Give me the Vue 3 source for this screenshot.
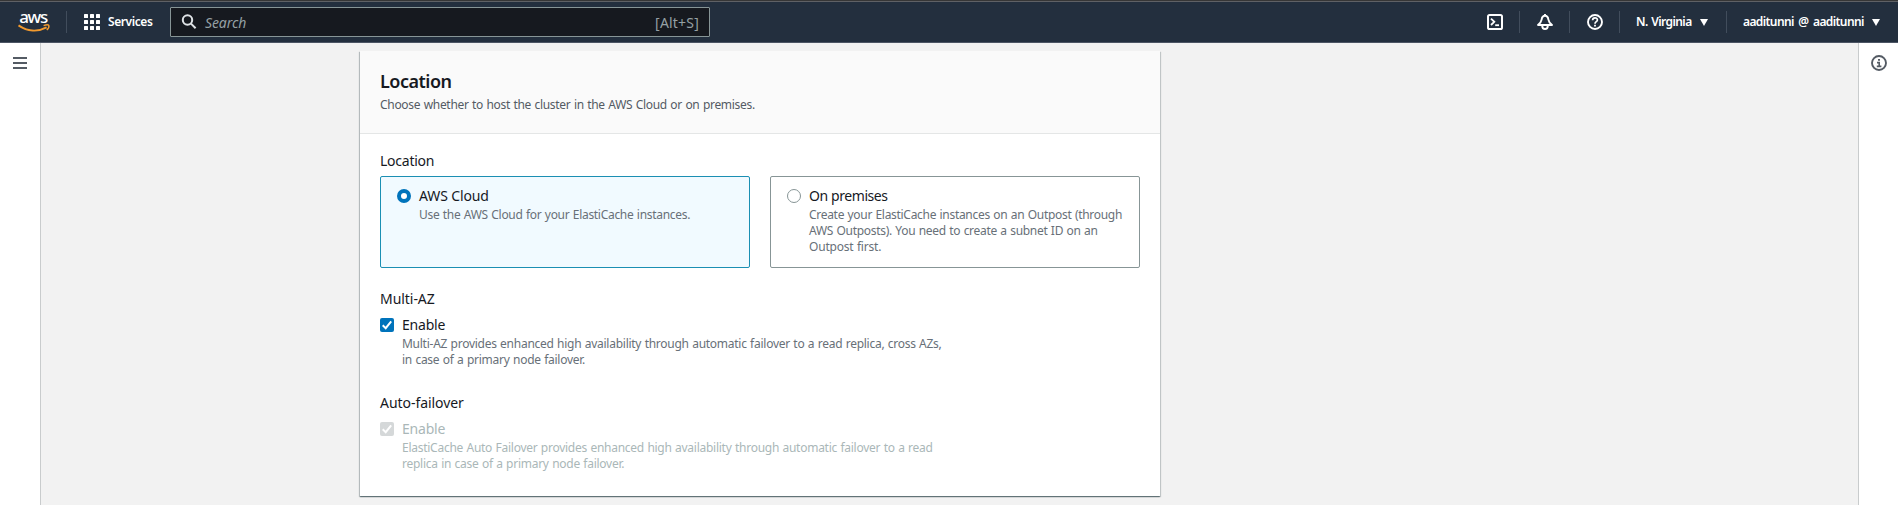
<script setup>
const locations = [
  {
    title: 'AWS Cloud',
    lines: [{ text: 'Use the AWS Cloud for your ElastiCache instances.', fit: 'fit-b' }],
    selected: true,
    fit: 'title-a'
  },
  {
    title: 'On premises',
    lines: [
      { text: 'Create your ElastiCache instances on an Outpost (through', fit: 'fit-b' },
      { text: 'AWS Outposts). You need to create a subnet ID on an', fit: 'fit-b' },
      { text: 'Outpost first.', fit: 'fit-a' }
    ],
    selected: false,
    fit: 'title-b'
  }
]

const toggles = [
  {
    label: 'Multi-AZ',
    lines: [
      'Multi-AZ provides enhanced high availability through automatic failover to a read replica, cross AZs,',
      'in case of a primary node failover.'
    ],
    disabled: false
  },
  {
    label: 'Auto-failover',
    lines: [
      'ElastiCache Auto Failover provides enhanced high availability through automatic failover to a read',
      'replica in case of a primary node failover.'
    ],
    disabled: true
  }
]
</script>

<template>
  <div class="page">
    <header class="topbar">
      <svg class="logo" width="34" height="30" viewBox="0 -3 34 30">
        <text x="1.2" y="12.8" class="logo-text" textLength="29">aws</text>
        <path d="M.5 15.4C9.5 21.6 20 22 28.6 17.4" class="smile" />
        <path d="M25.6 15.6C28 14.7 30.4 14.8 30.8 15.4C31.2 16.4 30.3 18.6 28.8 20" class="smile-tip" />
      </svg>
      <span class="divider first"></span>
      <button class="services">
        <svg width="16" height="16" viewBox="0 0 16 16" fill="#fff">
          <template v-for="r in 3" :key="r">
            <rect v-for="c in 3" :key="c" :x="(c - 1) * 6" :y="(r - 1) * 6" width="4" height="4" rx=".5" />
          </template>
        </svg>
        <span>Services</span>
      </button>
      <div class="search">
        <svg width="16" height="16" viewBox="0 0 16 16" fill="none" stroke="#dfe3e6" stroke-width="2">
          <circle cx="6.5" cy="6" r="4.7" />
          <path d="M10 9.6L14.6 14.2" />
        </svg>
        <span class="placeholder">Search</span>
        <span class="shortcut">[Alt+S]</span>
      </div>
      <nav class="utilities">
        <span class="icon">
          <svg width="16" height="16" viewBox="0 0 16 16" fill="none" stroke="#fff" stroke-width="2">
            <rect x="1" y="1" width="14" height="14" rx="1.6" />
            <path d="M4 4.6L7.3 7.8L4 11" stroke-width="1.8" />
            <path d="M8.2 11.2H12" stroke-width="1.8" />
          </svg>
        </span>
        <span class="divider"></span>
        <span class="icon">
          <svg width="16" height="16" viewBox="0 0 16 16" fill="none" stroke="#fff" stroke-width="1.9" stroke-linejoin="round">
            <path d="M8 0V2M8 1.8C5.8 1.8 4.9 3.4 4.6 5.6C4.2 8 3 9.4 1 11H15C13 9.4 11.8 8 11.4 5.6C11.1 3.4 10.2 1.8 8 1.8Z" />
            <path d="M5.2 11.4C5.2 16.2 10.8 16.2 10.8 11.4" />
          </svg>
        </span>
        <span class="divider"></span>
        <span class="icon">
          <svg width="16" height="16" viewBox="0 0 16 16" fill="none" stroke="#fff" stroke-width="1.9">
            <circle cx="8" cy="8" r="7" />
            <path d="M5.6 6.2C5.7 3.1 10.4 3.2 10.4 6C10.4 7.8 8 7.6 8 9.7" stroke-width="1.7" />
            <path d="M8 10.8V12.6" stroke-width="1.8" />
          </svg>
        </span>
        <span class="divider"></span>
        <button class="menu region">N. Virginia</button>
        <svg class="caret" width="8" height="7" viewBox="0 0 8 7"><path d="M0 0H8L4 7Z" fill="#fff" /></svg>
        <span class="divider account-divider"></span>
        <button class="menu account">aaditunni @ aaditunni</button>
        <svg class="caret" width="8" height="7" viewBox="0 0 8 7"><path d="M0 0H8L4 7Z" fill="#fff" /></svg>
      </nav>
    </header>

    <div class="body">
      <aside class="rail left">
        <svg width="14" height="12" viewBox="0 0 14 12" fill="#545b64">
          <rect width="14" height="2" />
          <rect y="5" width="14" height="2" />
          <rect y="10" width="14" height="2" />
        </svg>
      </aside>

      <main class="content">
        <section class="card">
          <div class="card-head">
            <h2>Location</h2>
            <p class="desc fit-b">Choose whether to host the cluster in the AWS Cloud or on premises.</p>
          </div>
          <div class="card-body">
            <div class="label location-label">Location</div>
            <div class="options">
              <div v-for="o in locations" :key="o.title" class="option" :class="{ selected: o.selected }">
                <span class="radio"></span>
                <div>
                  <div class="title" :class="o.fit">{{ o.title }}</div>
                  <p v-for="l in o.lines" :key="l.text" class="desc muted" :class="l.fit">{{ l.text }}</p>
                </div>
              </div>
            </div>
            <div v-for="t in toggles" :key="t.label" class="toggle" :class="{ disabled: t.disabled }">
              <div class="label">{{ t.label }}</div>
              <div class="toggle-row">
                <span class="checkbox">
                  <svg width="14" height="14" viewBox="0 0 14 14" fill="none" stroke="#fff" stroke-width="2">
                    <path d="M2.7 7.3L5.7 10.2L11.2 3.4" />
                  </svg>
                </span>
                <div>
                  <div class="title enable">Enable</div>
                  <p v-for="l in t.lines" :key="l" class="desc muted">{{ l }}</p>
                </div>
              </div>
            </div>
          </div>
        </section>
      </main>

      <aside class="rail right">
        <svg width="16" height="16" viewBox="0 0 16 16" fill="none" stroke="#545b64">
          <circle cx="8" cy="8" r="7" stroke-width="1.9" />
          <path d="M7 4.8H9" stroke-width="1.7" />
          <path d="M6 7.6H8.2V11.2M5.8 11.4H10.4" stroke-width="1.6" />
        </svg>
      </aside>
    </div>
  </div>
</template>

<style>
html,
body {
  margin: 0;
  overflow: hidden;
}
</style>

<style scoped>
.page {
  height: 505px;
  display: flex;
  flex-direction: column;
  overflow: hidden;
  background: #f2f2f2;
  font-family: "Noto Sans", "Open Sans", sans-serif;
  font-size: 14px;
  color: #16191f;
  white-space: nowrap;
}

.page * {
  box-sizing: border-box;
}

button {
  border: 0;
  padding: 0;
  background: none;
  color: #fff;
  font: 600 12px/16px "Noto Sans", sans-serif;
  text-align: left;
}

.topbar {
  flex: none;
  height: 43px;
  display: flex;
  align-items: center;
  padding-top: 1px;
  background: linear-gradient(#363636 1px, #5f6165 1px, #5f6165 2px, #232f3e 2px, #232f3e 42px, #4c5564 42px);
}

.logo {
  margin: 0 0 0 18px;
  overflow: visible;
}

.logo-text {
  font: 500 17px "Noto Sans", sans-serif;
  fill: #fff;
}

.smile {
  fill: none;
  stroke: #f29a2e;
  stroke-width: 1.9;
}

.smile-tip {
  fill: none;
  stroke: #f29a2e;
  stroke-width: 1.4;
}

.divider {
  width: 1px;
  height: 22px;
  background: #414d5c;
}

.divider.first {
  margin-left: 14px;
}

.services {
  display: flex;
  align-items: center;
  margin-left: 17px;
  width: 86px;
  gap: 8px;
  letter-spacing: -0.42px;
}

.search {
  width: 540px;
  height: 30px;
  display: flex;
  align-items: center;
  padding: 0 10px 0 10px;
  border: 1px solid #879596;
  border-radius: 1px;
  background: #16191f;
  color: #95a0a4;
}

.placeholder {
  margin-left: 8px;
  font-style: italic;
  letter-spacing: -0.1px;
}

.shortcut {
  margin-left: auto;
  letter-spacing: 0.2px;
}

.utilities {
  margin-left: auto;
  display: flex;
  align-items: center;
  padding-right: 18px;
}

.icon {
  width: 49px;
  display: flex;
  justify-content: center;
}

.region {
  width: 58px;
  margin-left: 16px;
  letter-spacing: -0.6px;
  word-spacing: 1.2px;
}

.account {
  width: 123px;
  margin-left: 16px;
  letter-spacing: -0.6px;
  word-spacing: 2px;
}

.caret {
  margin-left: 6px;
}

.account-divider {
  margin-left: 18px;
}

.body {
  flex: 1;
  display: flex;
}

.rail {
  flex: none;
  display: flex;
  justify-content: center;
  align-items: flex-start;
  background: #fff;
}

.left {
  width: 41px;
  padding-top: 14px;
  border-right: 1px solid #c9cccd;
}

.right {
  width: 40px;
  padding-top: 12px;
  border-left: 1px solid #c9cccd;
}

.content {
  flex: 1;
  padding: 8px 0 0 319px;
}

.card {
  width: 800px;
  height: 445px;
  background: #fff;
  box-shadow: 0 1px 1px rgba(0, 28, 36, 0.4), 1px 1px 1px rgba(0, 28, 36, 0.15), -1px 1px 1px rgba(0, 28, 36, 0.2);
}

.card-head {
  height: 83px;
  padding: 19px 20px 0;
  border-bottom: 1px solid #e4e6e6;
  background: #fafafa;
}

h2 {
  margin: 0 0 5px;
  font-size: 18px;
  font-weight: 600;
  line-height: 22px;
  letter-spacing: -0.5px;
}

.desc {
  margin: 0;
  font-size: 12px;
  line-height: 16px;
  letter-spacing: -0.26px;
  word-spacing: 0.55px;
  color: #545b64;
}

.fit-a {
  letter-spacing: -0.2px;
}

.fit-b {
  letter-spacing: -0.3px;
  word-spacing: 0.6px;
}

.muted {
  color: #687078;
}

.card-body {
  padding: 16px 20px 0;
}

.label {
  line-height: 22px;
  margin-bottom: 4px;
  letter-spacing: -0.05px;
}

.location-label {
  letter-spacing: -0.24px;
}

.options {
  display: grid;
  grid-template-columns: 1fr 1fr;
  gap: 20px;
}

.option {
  height: 92px;
  display: flex;
  align-items: flex-start;
  gap: 8px;
  padding: 8px 16px 0;
  border: 1px solid #879596;
  border-radius: 2px;
}

.option.selected {
  border-color: #1b8fb3;
  background: #f1faff;
}

.radio {
  flex: none;
  width: 14px;
  height: 14px;
  margin-top: 4px;
  border: 1px solid #879596;
  border-radius: 50%;
  background: #fff;
}

.selected .radio {
  border: 4px solid #0073bb;
}

.title {
  line-height: 22px;
}

.title-a {
  letter-spacing: -0.12px;
}

.title-b {
  letter-spacing: -0.42px;
}

.enable {
  letter-spacing: -0.2px;
}

.toggle {
  margin-top: 20px;
}

.toggle + .toggle {
  margin-top: 24px;
}

.toggle-row {
  display: flex;
  gap: 8px;
}

.checkbox {
  flex: none;
  width: 14px;
  height: 14px;
  margin-top: 4px;
  border-radius: 2px;
  background: #0073bb;
}

.checkbox svg {
  display: block;
}

.disabled .checkbox {
  background: #d5d8d9;
}

.disabled .title,
.disabled .desc {
  color: #aab7b8;
}
</style>
